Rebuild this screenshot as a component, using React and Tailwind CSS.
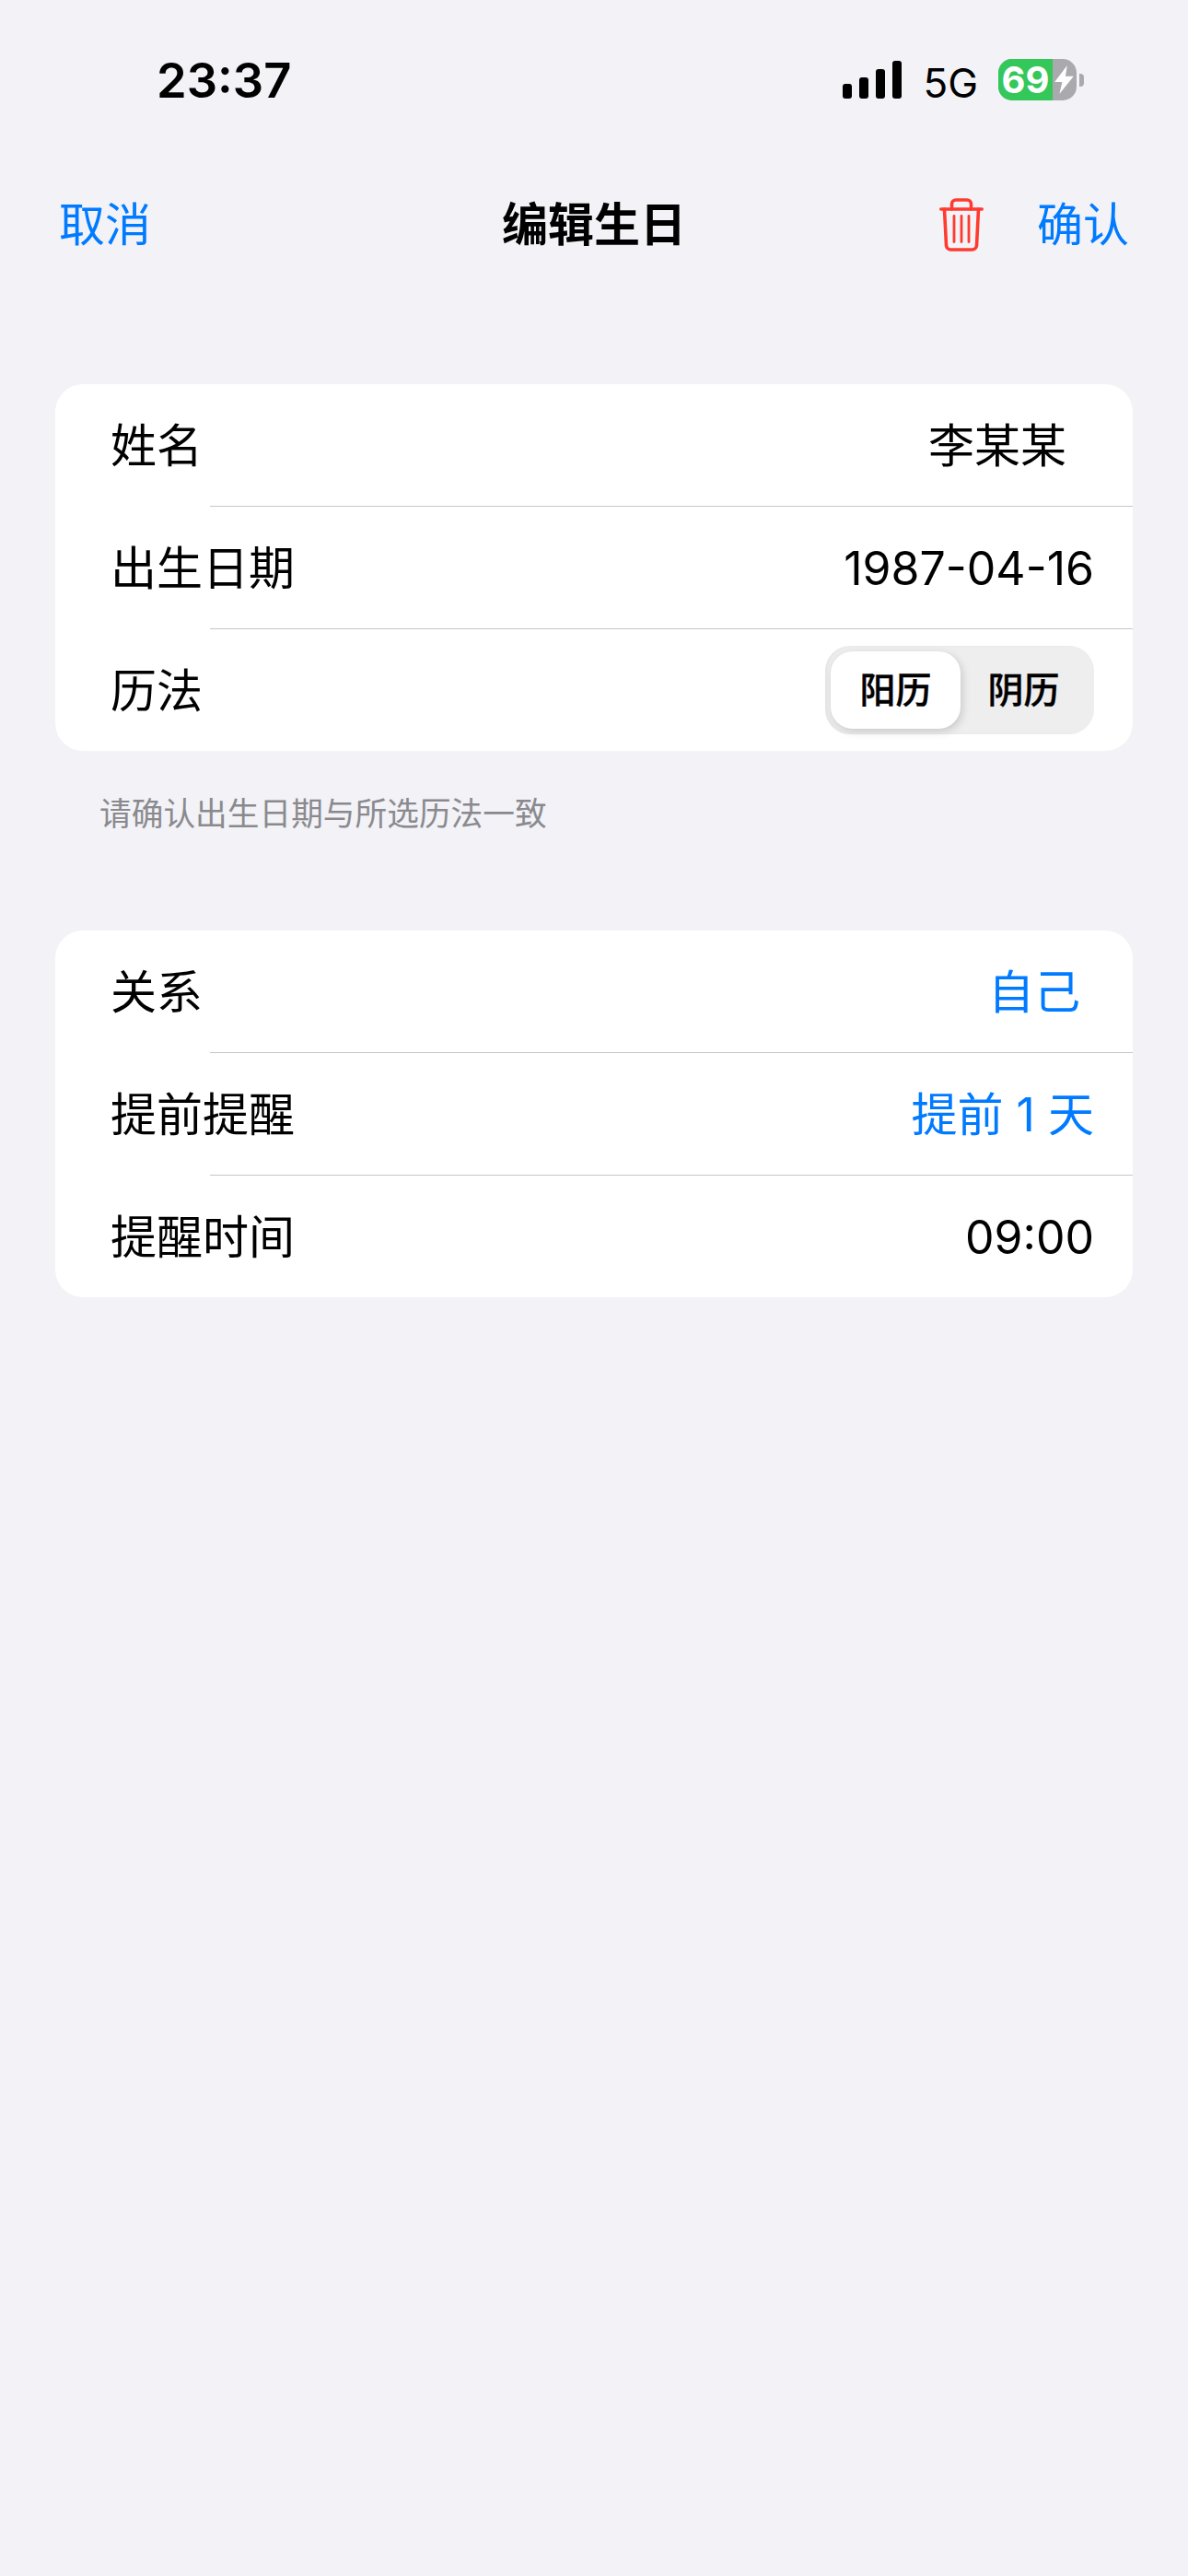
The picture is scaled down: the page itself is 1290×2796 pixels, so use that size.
import React from "react";

const Trash = () => (
  <svg width="48" height="58" viewBox="0 0 48 58" fill="none" stroke="#ff3b30" strokeWidth="3.6" strokeLinecap="round" strokeLinejoin="round">
    <path d="M13.5 12V6.5a4.5 4.5 0 0 1 4.5-4.5h12a4.5 4.5 0 0 1 4.5 4.5V12" />
    <path d="M1.8 12h44.4" />
    <path d="M5.5 12l2 39.5a5 5 0 0 0 5 4.5h23a5 5 0 0 0 5-4.5l2-39.5" />
    <path d="M16 19.5v28M24 19.5v28M32 19.5v28" strokeWidth="2.8" />
  </svg>
);

const Bolt = () => (
  <svg width="21" height="31" viewBox="0 0 20 30" fill="#fff">
    <path d="M13.2 0 0 17.4h8L5 30 20 11.4h-8.6z" />
  </svg>
);

const Row = ({ label, children, right = "pr-[42px]", blue }) => (
  <div className={`flex h-[132px] items-center justify-between pl-[60px] text-[50px] text-black ${right}`}>
    <span className="whitespace-nowrap pt-[2px]">{label}</span>
    <span className={blue ? "whitespace-nowrap pt-[2px] text-[#007aff]" : "whitespace-nowrap pt-[2px]"}>{children}</span>
  </div>
);

const Line = () => <div className="ml-[168px] h-px bg-[#c6c6c8]" />;

export default function App() {
  return (
    <div className="min-h-[2796px] w-[1290px] bg-[#f2f2f7] font-['Inter','Noto_Sans_CJK_SC',sans-serif]">
      <div className="flex h-[175px] items-center pl-[170px] pr-[113px]">
        <span className="text-[52.5px] font-semibold leading-none text-black">23:37</span>
        <div className="mb-[2px] ml-auto flex items-center">
          <div className="flex h-[41px] items-end gap-[8px]">
            <div className="h-[16px] w-[10px] rounded-[3px] bg-black" />
            <div className="h-[23px] w-[10px] rounded-[3px] bg-black" />
            <div className="h-[32px] w-[10px] rounded-[3px] bg-black" />
            <div className="h-[41px] w-[10px] rounded-[3px] bg-black" />
          </div>
          <span className="ml-[23px] mt-[6px] text-[44px] leading-none font-normal text-black">5G</span>
          <div className="ml-[22px] flex h-[45px] w-[85px] rounded-[15px] bg-[#a9a9ae]">
            <div className="flex w-[59px] items-center justify-center rounded-l-[15px] bg-[#34c759] text-[40px] leading-none font-bold text-white">69</div>
            <div className="flex flex-1 items-center justify-center pr-[1px]">
              <Bolt />
            </div>
          </div>
          <div className="ml-[3px] h-[14px] w-[5px] rounded-r-[4px] bg-[#a9a9ae]" />
        </div>
      </div>

      <div className="flex h-[136px] items-center px-[64px] pt-[2px] text-[50px]">
        <div className="flex-1 text-[#007aff]">取消</div>
        <div className="font-semibold text-black">编辑生日</div>
        <div className="flex flex-1 items-center justify-end gap-[58px] text-[#007aff]">
          <Trash />
          <span>确认</span>
        </div>
      </div>

      <div className="mx-[60px] mt-[106px] rounded-[30px] bg-white">
        <Row label="姓名" right="pr-[72px]">李某某</Row>
        <Line />
        <Row label="出生日期">1987-04-16</Row>
        <Line />
        <div className="flex h-[132px] items-center justify-between pl-[60px] pr-[42px] text-[50px] text-black">
          <span className="pt-[2px]">历法</span>
          <div className="flex h-[96px] w-[292px] items-center rounded-[27px] bg-[#eeeeee] pl-[6px] text-[39px] font-medium text-black shadow-[inset_2px_0_3px_rgba(0,0,0,0.04)] [-webkit-text-stroke:0.4px_black]">
            <div className="flex h-[84px] w-[141px] items-center justify-center rounded-[24px] bg-white shadow-[2px_3px_10px_rgba(0,0,0,0.16)]">阳历</div>
            <div className="flex flex-1 items-center justify-center pr-[8px]">阴历</div>
          </div>
        </div>
      </div>

      <div className="mb-[103px] mt-[44px] h-[48px] pl-[108px] text-[34.7px] leading-[48px] text-[#8a8a8e]">
        请确认出生日期与所选历法一致
      </div>

      <div className="mx-[60px] rounded-[30px] bg-white">
        <Row label="关系" right="pr-[57px]" blue>自己</Row>
        <Line />
        <Row label="提前提醒" blue>提前 1 天</Row>
        <Line />
        <Row label="提醒时间">09:00</Row>
      </div>
    </div>
  );
}
